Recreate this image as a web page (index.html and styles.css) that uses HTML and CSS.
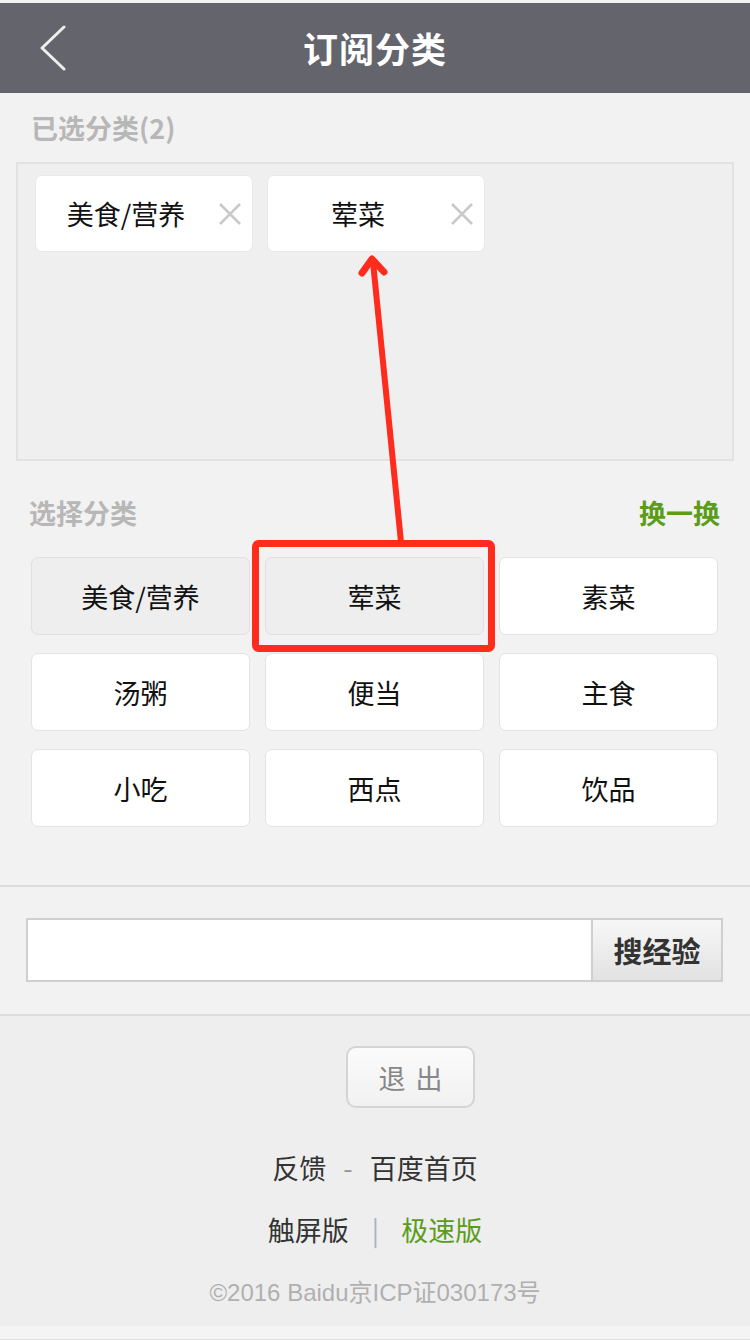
FILE: index.html
```html
<!DOCTYPE html>
<html lang="zh-CN">
<head>
<meta charset="utf-8">
<title>订阅分类</title>
<link rel="stylesheet" href="styles.css">
</head>
<body>
<div class="page">
  <header class="topbar">
    <a class="back" href="#">
      <svg width="28" height="46" viewBox="0 0 28 46"><polyline points="24,2 2,23 24,44" fill="none" stroke="#eeeeee" stroke-width="3" stroke-linecap="round" stroke-linejoin="round"/></svg>
    </a>
    <h1 class="title">订阅分类</h1>
    <span class="spacer"></span>
  </header>

  <section class="selected">
    <div class="sec-title sel-title">已选分类(2)</div>
    <div class="selbox">
      <div class="tag"><span class="tag-text">美食/营养</span><span class="tag-x"><svg width="24" height="24" viewBox="0 0 24 24"><path d="M2 2 L22 22 M22 2 L2 22" stroke="#c9c9c9" stroke-width="2.6" fill="none"/></svg></span></div>
      <div class="tag"><span class="tag-text">荤菜</span><span class="tag-x"><svg width="24" height="24" viewBox="0 0 24 24"><path d="M2 2 L22 22 M22 2 L2 22" stroke="#c9c9c9" stroke-width="2.6" fill="none"/></svg></span></div>
    </div>
  </section>

  <section class="choose">
    <div class="sec-head">
      <span class="sec-title">选择分类</span>
      <a class="swap" href="#">换一换</a>
    </div>
    <div class="grid">
      <div class="cell on">美食/营养</div>
      <div class="cell on">荤菜</div>
      <div class="cell">素菜</div>
      <div class="cell">汤粥</div>
      <div class="cell">便当</div>
      <div class="cell">主食</div>
      <div class="cell">小吃</div>
      <div class="cell">西点</div>
      <div class="cell">饮品</div>
    </div>
  </section>

  <div class="search">
    <input class="search-input" type="text">
    <button class="search-btn">搜经验</button>
  </div>

  <footer class="footer">
    <button class="exit">退 出</button>
    <div class="links">反馈<span class="dash">-</span>百度首页</div>
    <div class="links">触屏版<span class="bar">|</span><a class="green" href="#">极速版</a></div>
    <div class="copy">©2016 Baidu京ICP证030173号</div>
  </footer>
  <div class="bottom-strip"></div>

  <svg class="annot" width="750" height="1340" viewBox="0 0 750 1340">
    <rect x="255.5" y="543.5" width="236" height="105" rx="3" fill="none" stroke="#ff2b1c" stroke-width="7"/>
    <line x1="401" y1="542" x2="373" y2="262" stroke="#ff2b1c" stroke-width="6" stroke-linecap="round"/>
    <polyline points="362,273 372,259 384,272" fill="none" stroke="#ff2b1c" stroke-width="7" stroke-linecap="round" stroke-linejoin="round"/>
  </svg>
</div>
</body>
</html>
```

FILE: styles.css
```css
* { box-sizing: border-box; }
html, body { margin: 0; padding: 0; }
body {
  background: #f2f2f2;
  font-family: "Noto Sans CJK SC", "Liberation Sans", sans-serif;
  color: #222;
}
.page {
  position: relative;
  width: 750px;
  padding-top: 3px;
  background: #f2f2f2;
}
.topbar {
  height: 90px;
  background: #64646c;
  display: grid;
  grid-template-columns: 1fr auto 1fr;
  align-items: center;
}
.back {
  display: flex;
  align-items: center;
  padding-left: 40px;
  height: 90px;
}
.title {
  margin: 0;
  color: #ffffff;
  font-size: 35px;
  font-weight: 700;
  line-height: 40px;
  letter-spacing: 1px;
}
.sec-title {
  font-size: 27px;
  line-height: 28px;
  color: #b7b7b7;
  font-weight: 700;
}
.sel-title {
  padding: 21px 31px 20px;
  height: 69px;
}
.selbox {
  margin: 0 16px;
  height: 299px;
  border: 2px solid #e2e2e2;
  background: #efefef;
  padding: 11px 17px;
  display: flex;
  gap: 14px;
  align-items: flex-start;
}
.tag {
  width: 218px;
  height: 77px;
  background: #fff;
  border: 1px solid #e9e9e9;
  border-radius: 7px;
  display: flex;
  align-items: center;
}
.tag-text {
  width: 180px;
  text-align: center;
  font-size: 27px;
  color: #111;
}
.tag-x {
  display: flex;
  margin-left: 2px;
}
.sec-head {
  display: flex;
  justify-content: space-between;
  align-items: center;
  height: 96px;
  padding: 38px 30px 30px 29px;
}
.swap {
  font-size: 27px;
  line-height: 28px;
  color: #5b9c1b;
  font-weight: 700;
  text-decoration: none;
}
.grid {
  display: grid;
  grid-template-columns: repeat(3, 219px);
  grid-auto-rows: 78px;
  column-gap: 15px;
  row-gap: 18px;
  padding: 0 32px 58px 31px;
  border-bottom: 2px solid #dcdcdc;
}
.cell {
  background: #ffffff;
  border: 1px solid #e3e3e3;
  border-radius: 7px;
  display: flex;
  align-items: center;
  justify-content: center;
  font-size: 27px;
  color: #111;
}
.cell.on {
  background: #eeeeee;
  border-color: #e0e0e0;
}
.search {
  display: flex;
  padding: 31px 27px 32px 26px;
  border-bottom: 2px solid #dcdcdc;
}
.search-input {
  width: 565px;
  height: 64px;
  border: 2px solid #cfcfcf;
  border-right: 0;
  background: #fff;
  margin: 0;
  outline: none;
}
.search-btn {
  width: 132px;
  height: 64px;
  margin: 0;
  border: 2px solid #cfcfcf;
  background: linear-gradient(#f7f7f7, #e2e2e2);
  font-family: "Noto Sans CJK SC", sans-serif;
  font-size: 29px;
  font-weight: 700;
  color: #333;
  padding: 0;
}
.footer {
  background: #eeeeee;
  display: flex;
  flex-direction: column;
  align-items: center;
  padding: 30px 0 19px;
}
.exit {
  width: 129px;
  height: 62px;
  border: 2px solid #d4d4d4;
  border-radius: 10px;
  background: linear-gradient(#fbfbfb, #f1f1f1);
  font-family: "Noto Sans CJK SC", sans-serif;
  font-size: 27px;
  color: #888;
  letter-spacing: 2px;
  padding: 0 0 0 2px;
  margin: 0 0 46px 71px;
}
.links {
  font-size: 27px;
  line-height: 28px;
  color: #333;
  margin-bottom: 34px;
}
.dash {
  color: #999;
  margin: 0 17px;
}
.bar {
  color: #a8b4c0;
  margin: 0 22px 0 23px;
}
.green {
  color: #5b9c1b;
  text-decoration: none;
}
.links + .links { margin-bottom: 35px; }
.copy {
  font-family: "Liberation Sans", "Noto Sans CJK SC", sans-serif;
  font-size: 24px;
  line-height: 28px;
  color: #b0b0b0;
}
.bottom-strip {
  height: 15px;
  background: #f4f4f4;
  border-bottom: 2px solid #e0e0e0;
}
.annot {
  position: absolute;
  left: 0;
  top: 0;
  pointer-events: none;
}
```
